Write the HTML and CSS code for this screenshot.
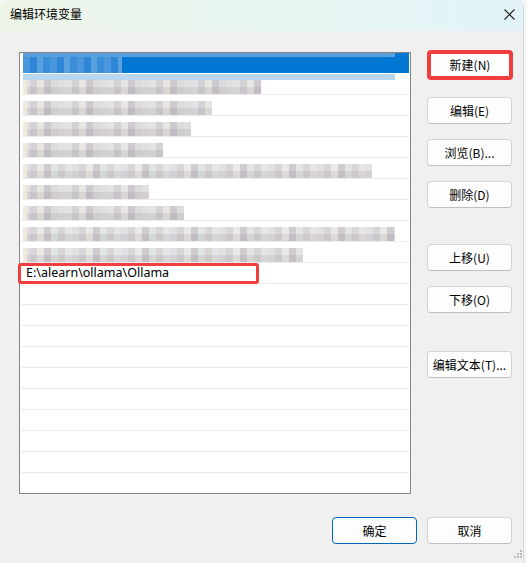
FILE: index.html
```html
<!DOCTYPE html>
<html lang="zh-CN">
<head>
<meta charset="utf-8">
<title>编辑环境变量</title>
<link rel="stylesheet" href="styles.css">
</head>
<body>
<div class="window">
  <div class="titlebar">
    <span class="title">编辑环境变量</span>
    <svg class="close" width="11" height="11" viewBox="0 0 11 11"><path d="M0.5 0.5 L10.5 10.5 M10.5 0.5 L0.5 10.5" stroke="#1a1a1a" stroke-width="1.1" fill="none"/></svg>
  </div>
  <div class="main">
    <div class="list">
      <div class="row sel"><span class="selbar"></span></div>
      <div class="row bleed"><span class="blur" style="width:238px"></span></div>
      <div class="row"><span class="blur" style="width:189px"></span></div>
      <div class="row"><span class="blur" style="width:168px"></span></div>
      <div class="row"><span class="blur" style="width:140px"></span></div>
      <div class="row"><span class="blur long" style="width:349px"></span></div>
      <div class="row"><span class="blur" style="width:126px"></span></div>
      <div class="row"><span class="blur" style="width:161px"></span></div>
      <div class="row"><span class="blur long" style="width:372px"></span></div>
      <div class="row"><span class="blur long" style="width:280px"></span></div>
      <div class="row text">E:\alearn\ollama\Ollama</div>
      <div class="row"></div>
      <div class="row"></div>
      <div class="row"></div>
      <div class="row"></div>
      <div class="row"></div>
      <div class="row"></div>
      <div class="row"></div>
      <div class="row"></div>
      <div class="row"></div>
      <div class="mark"></div>
    </div>
    <div class="side">
      <button class="btn marked">新建(N)</button>
      <button class="btn b-edit">编辑(E)</button>
      <button class="btn b-gap15">浏览(B)...</button>
      <button class="btn b-gap15">删除(D)</button>
      <button class="btn b-up">上移(U)</button>
      <button class="btn b-gap15">下移(O)</button>
      <button class="btn b-text">编辑文本(T)...</button>
    </div>
  </div>
  <div class="footer">
    <button class="btn primary">确定</button>
    <button class="btn">取消</button>
  </div>
  <svg class="grip" width="8" height="8" viewBox="0 0 8 8">
    <rect x="6" y="0" width="2" height="2" fill="#b8b8b8"/>
    <rect x="3" y="3" width="2" height="2" fill="#b8b8b8"/>
    <rect x="6" y="3" width="2" height="2" fill="#b8b8b8"/>
    <rect x="0" y="6" width="2" height="2" fill="#b8b8b8"/>
    <rect x="3" y="6" width="2" height="2" fill="#b8b8b8"/>
    <rect x="6" y="6" width="2" height="2" fill="#b8b8b8"/>
  </svg>
</div>
</body>
</html>
```
FILE: styles.css
```css
* { box-sizing: border-box; }
html, body { margin: 0; padding: 0; }
body {
  width: 527px;
  height: 563px;
  background: #f6f6f6;
  font-family: "Noto Sans CJK SC", "Noto Sans", sans-serif;
  font-size: 12px;
  color: #111;
  overflow: hidden;
}
.window {
  position: relative;
  width: 524px;
  height: 563px;
  background: #f0f0f0;
  border-radius: 8px 8px 0 0;
  border-right: 1px solid #d6d6d6;
  overflow: hidden;
}
.titlebar {
  height: 31px;
  display: flex;
  justify-content: space-between;
  align-items: flex-start;
  padding: 0 8px 0 10px;
  background: linear-gradient(90deg, #edf5e8 0%, #e8f5ef 45%, #e2f4f9 100%);
}
.title {
  padding-top: 6px;
  line-height: 16px;
  font-size: 12px;
  color: #000;
}
.close { margin-top: 9px; }
.main {
  display: flex;
  align-items: flex-start;
  padding: 21px 0 0 19px;
}
.list {
  position: relative;
  width: 392px;
  height: 442px;
  border: 1px solid #858585;
  background: #fff;
}
.row {
  height: 21px;
  margin: 0 1px;
  border-bottom: 1px solid #ececec;
  padding: 6px 0 0 2px;
}
.row.sel {
  padding: 0 0 0 2px;
  border-bottom: none;
}
.selbar {
  display: block;
  height: 20px;
  background:
    linear-gradient(#5a9fd9, #5a9fd9) no-repeat 0 0 / 372px 4px,
    repeating-linear-gradient(90deg, #4b97dd 0 7px, #2d86d6 7px 14px, #5aa2df 14px 20px, #3a8dd9 20px 27px) no-repeat 0 4px / 99px 16px,
    #0078d4;
}
.row.bleed {
  background: linear-gradient(#b9d6ef, #b9d6ef) no-repeat 2px 0 / 372px 6px;
}
.blur {
  display: block;
  height: 14px;
  background:
    linear-gradient(90deg, #f3e8da 0 4px, transparent 4px),
    linear-gradient(to bottom, transparent 50%, rgba(110, 100, 112, 0.13) 50%),
    repeating-linear-gradient(90deg, #e4e2e4 0 7px, #d5d2d6 7px 14px, #e8e6e3 14px 21px, #cdc9ce 21px 28px, #dddcdc 28px 35px, #e2dfe2 35px 42px);
}
.blur.long {
  background:
    linear-gradient(90deg, #f3e8da 0 4px, transparent 4px),
    linear-gradient(to bottom, transparent 50%, rgba(110, 100, 112, 0.12) 50%),
    repeating-linear-gradient(90deg, #e2e0e2 0 7px, #d8d5d8 7px 14px, #ebe9e7 14px 21px, #cfcbcf 21px 28px, #e4e4e4 28px 35px, #d9d6d3 35px 42px, #e7e5e7 42px 49px);
}
.row.text {
  padding: 0 0 0 5px;
  line-height: 20px;
  font-family: "Noto Sans", "Noto Sans CJK SC", sans-serif;
  font-size: 12.5px;
  color: #000;
}
.mark {
  position: absolute;
  left: -2px;
  top: 210px;
  width: 241px;
  height: 21px;
  border: 3px solid #f13d3d;
  border-radius: 3px;
}
.side {
  display: flex;
  flex-direction: column;
  margin: -2px 0 0 16px;
}
.btn {
  width: 85px;
  height: 27px;
  padding: 0;
  background: #fdfdfd;
  border: 1px solid #d3d3d3;
  border-bottom-color: #bfbfbf;
  border-radius: 4px;
  font-family: "Noto Sans CJK SC", "Noto Sans", sans-serif;
  font-size: 12px;
  color: #000;
  line-height: 1;
  text-align: center;
}
.btn.marked {
  width: 86px;
  height: 30px;
  border: 4px solid #f13d3d;
  border-radius: 4px;
}
.b-edit { margin-top: 17px; }
.b-gap15 { margin-top: 15px; }
.b-up { margin-top: 36px; }
.b-text { margin-top: 38px; }
.footer {
  display: flex;
  justify-content: flex-end;
  gap: 10px;
  padding: 23px 11px 0 0;
}
.btn.primary {
  border: 1px solid #0067c0;
}
.grip {
  position: absolute;
  right: 1px;
  bottom: 5px;
}
```
